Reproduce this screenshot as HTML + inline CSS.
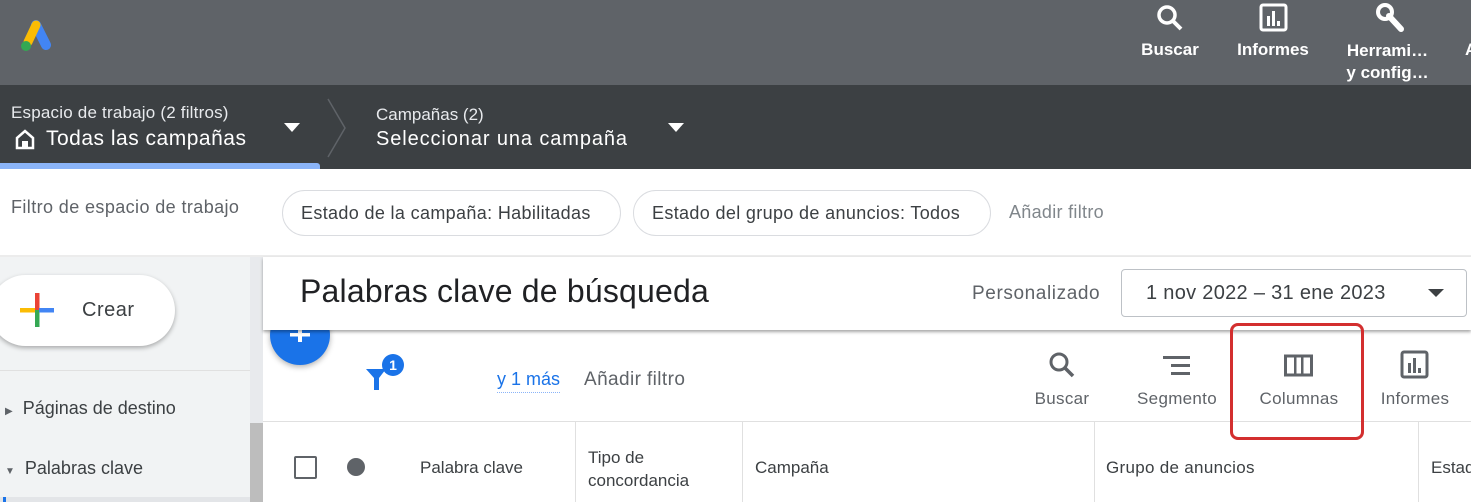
<!DOCTYPE html>
<html><head><meta charset="utf-8">
<style>
*{margin:0;padding:0;box-sizing:border-box}
body{width:1471px;height:502px;overflow:hidden;font-family:"Liberation Sans",sans-serif;background:#fff;position:relative}
.abs{position:absolute}
.top{left:0;top:0;width:1471px;height:85px;background:#5f6368}
.bar2{left:0;top:85px;width:1471px;height:84px;background:#3c4043}
.tnav{color:#fff;font-weight:bold;font-size:17px;text-align:center}
.w{color:#e8eaed}
.chip{border:1px solid #dadce0;border-radius:24px;height:46px;top:190px;font-size:18px;color:#3c4043;line-height:44px;padding:0 18px;letter-spacing:0.35px}
.tb{font-size:17px;color:#5f6368;text-align:center;letter-spacing:0.3px}
.th{font-size:17px;color:#3c4043}
.vd{top:422px;width:1px;height:80px;background:#e0e0e0}
</style></head><body>
<div class="abs top"></div>
<svg class="abs" style="left:18px;top:20px" width="36" height="34" viewBox="0 0 36 34">
<line x1="18" y1="5" x2="28" y2="25" stroke="#4285f4" stroke-width="10" stroke-linecap="round"/>
<line x1="18" y1="5" x2="10" y2="22" stroke="#fbbc04" stroke-width="9" stroke-linecap="round"/>
<circle cx="8" cy="26" r="5" fill="#34a853"/>
</svg>
<svg class="abs" style="left:1155px;top:3px" width="30" height="30" viewBox="0 0 30 30"><circle cx="12" cy="12" r="8" stroke="#fff" stroke-width="3.5" fill="none"/><line x1="18" y1="18" x2="26" y2="26" stroke="#fff" stroke-width="4"/></svg>
<div class="abs tnav" style="left:1130px;top:40px;width:80px">Buscar</div>
<svg class="abs" style="left:1259px;top:3px" width="30" height="30" viewBox="0 0 30 30"><rect x="2" y="2" width="25" height="25" rx="2" stroke="#fff" stroke-width="3" fill="none"/><rect x="8" y="13" width="3" height="10" fill="#fff"/><rect x="13" y="8" width="3" height="15" fill="#fff"/><rect x="18" y="18" width="3" height="5" fill="#fff"/></svg>
<div class="abs tnav" style="left:1228px;top:40px;width:90px">Informes</div>
<svg class="abs" style="left:1374px;top:2px" width="34" height="32" viewBox="0 0 34 32"><circle cx="11" cy="10" r="7" stroke="#fff" stroke-width="4" fill="none"/><line x1="15" y1="14" x2="27" y2="27" stroke="#fff" stroke-width="6" stroke-linecap="round"/></svg>
<div class="abs tnav" style="left:1340px;top:40px;width:95px;line-height:22px">Herrami…<br>y config…</div>
<div class="abs tnav" style="left:1465px;top:40px">A</div>

<div class="abs bar2"></div>
<div class="abs w" style="left:11px;top:103px;font-size:17px;letter-spacing:0.2px">Espacio de trabajo (2 filtros)</div>
<svg class="abs" style="left:14px;top:128px" width="22" height="22" viewBox="0 0 22 22"><path d="M3 10 L11 3 L19 10 V20 H3 Z" stroke="#fff" stroke-width="2.5" fill="none"/><rect x="8" y="13" width="6" height="7" fill="#fff"/></svg>
<div class="abs" style="left:46px;top:127px;font-size:21px;color:#fff;letter-spacing:0.5px">Todas las campañas</div>
<svg class="abs" style="left:284px;top:123px" width="16" height="10"><path d="M0 0 H16 L8 9Z" fill="#fff"/></svg>
<svg class="abs" style="left:325px;top:97px" width="25" height="62"><path d="M3 2 L20 31 L3 60" stroke="#5f6368" stroke-width="1.5" fill="none"/></svg>
<div class="abs w" style="left:376px;top:105px;font-size:17px">Campañas (2)</div>
<div class="abs" style="left:376px;top:128px;font-size:20px;color:#fff;letter-spacing:0.9px">Seleccionar una campaña</div>
<svg class="abs" style="left:668px;top:123px" width="16" height="10"><path d="M0 0 H16 L8 9Z" fill="#fff"/></svg>
<div class="abs" style="left:0;top:163px;width:320px;height:6px;background:#8ab4f8;border-radius:0 3px 0 0"></div>

<div class="abs" style="left:11px;top:197px;font-size:18px;color:#5f6368;letter-spacing:0.4px">Filtro de espacio de trabajo</div>
<div class="abs chip" style="left:282px;width:339px">Estado de la campaña: Habilitadas</div>
<div class="abs chip" style="left:633px;width:358px">Estado del grupo de anuncios: Todos</div>
<div class="abs" style="left:1009px;top:202px;font-size:18px;color:#80868b;letter-spacing:0.3px">Añadir filtro</div>
<div class="abs" style="left:0;top:255px;width:1471px;height:2px;background:#ececec"></div>

<div class="abs" style="left:0;top:257px;width:250px;height:245px;background:#f1f3f4"></div>
<div class="abs" style="left:250px;top:257px;width:13px;height:245px;background:#e8eaed"></div>
<div class="abs" style="left:250px;top:423px;width:13px;height:79px;background:#bdbdbd"></div>
<div class="abs" style="left:-10px;top:275px;width:185px;height:71px;background:#fff;border-radius:36px;box-shadow:0 2px 5px rgba(0,0,0,.3)"></div>
<svg class="abs" style="left:18px;top:291px" width="38" height="38" viewBox="0 0 38 38"><rect x="17" y="2" width="4.5" height="17" fill="#ea4335"/><rect x="17" y="19" width="4.5" height="17" fill="#34a853"/><rect x="2" y="17" width="15" height="4.5" fill="#fbbc04"/><rect x="21" y="17" width="15" height="4.5" fill="#4285f4"/></svg>
<div class="abs" style="left:82px;top:299px;font-size:20px;color:#3c4043;letter-spacing:0.5px">Crear</div>
<div class="abs" style="left:0;top:370px;width:250px;height:1px;background:#e0e0e0"></div>
<div class="abs" style="left:5px;top:398px;font-size:18px;color:#3c4043"><span style="font-size:10px;color:#5f6368">▶</span>&nbsp; Páginas de destino</div>
<div class="abs" style="left:5px;top:458px;font-size:18px;color:#3c4043"><span style="font-size:10px;color:#5f6368">▼</span>&nbsp; Palabras clave</div>
<div class="abs" style="left:0;top:497px;width:250px;height:5px;background:#e3e5e8"></div>
<div class="abs" style="left:3px;top:497px;width:3px;height:5px;background:#1a73e8"></div>

<div class="abs" style="left:263px;top:257px;width:1208px;height:73px;background:#fff;box-shadow:0 2px 3px rgba(0,0,0,.35);z-index:2"></div>
<div class="abs" style="left:300px;top:273px;font-size:32px;color:#202124;z-index:3;letter-spacing:0.2px">Palabras clave de búsqueda</div>
<div class="abs" style="left:972px;top:283px;font-size:19px;color:#5f6368;z-index:3;letter-spacing:0.6px">Personalizado</div>
<div class="abs" style="left:1121px;top:269px;width:346px;height:48px;border:1px solid #bdc1c6;border-radius:4px;z-index:3"></div>
<div class="abs" style="left:1146px;top:282px;font-size:20px;color:#3c4043;z-index:3;letter-spacing:0.3px">1 nov 2022 – 31 ene 2023</div>
<svg class="abs" style="left:1428px;top:289px;z-index:3" width="16" height="9"><path d="M0 0H16L8 8Z" fill="#3c4043"/></svg>

<div class="abs" style="left:270px;top:305px;width:60px;height:60px;border-radius:50%;background:#1a73e8;box-shadow:0 2px 6px rgba(0,0,0,.3);z-index:1"></div>
<svg class="abs" style="left:288px;top:330px;z-index:1" width="24" height="14"><rect x="10" y="0" width="4" height="12" fill="#fff"/><rect x="2" y="3" width="20" height="3.5" fill="#fff"/></svg>
<svg class="abs" style="left:364px;top:352px" width="42" height="42" viewBox="0 0 42 42"><path d="M2 17 H22 L15 26 V38 H10 V26 Z" fill="#1a73e8"/><circle cx="29" cy="13" r="11" fill="#1a73e8"/><text x="29" y="18" font-size="14" font-weight="bold" fill="#fff" text-anchor="middle" font-family="Liberation Sans">1</text></svg>
<div class="abs" style="left:497px;top:369px;font-size:18px;color:#1a73e8;border-bottom:1px dotted #8ab4f8;padding-bottom:2px">y 1 más</div>
<div class="abs" style="left:584px;top:369px;font-size:19px;color:#5f6368;letter-spacing:0.4px">Añadir filtro</div>

<svg class="abs" style="left:1047px;top:350px" width="30" height="30" viewBox="0 0 30 30"><circle cx="12" cy="12" r="8" stroke="#5f6368" stroke-width="3" fill="none"/><line x1="18" y1="18" x2="26" y2="26" stroke="#5f6368" stroke-width="3.5"/></svg>
<div class="abs tb" style="left:1022px;top:389px;width:80px">Buscar</div>
<svg class="abs" style="left:1162px;top:355px" width="32" height="22"><rect x="1" y="1" width="27" height="3" fill="#5f6368"/><rect x="9" y="9" width="19" height="3" fill="#5f6368"/><rect x="9" y="17" width="19" height="3" fill="#5f6368"/></svg>
<div class="abs tb" style="left:1120px;top:389px;width:114px">Segmento</div>
<svg class="abs" style="left:1284px;top:354px" width="30" height="24"><rect x="1.5" y="2" width="26" height="19" stroke="#5f6368" stroke-width="3" fill="none"/><rect x="10" y="2" width="2.5" height="19" fill="#5f6368"/><rect x="17" y="2" width="2.5" height="19" fill="#5f6368"/></svg>
<div class="abs tb" style="left:1242px;top:389px;width:114px">Columnas</div>
<svg class="abs" style="left:1400px;top:350px" width="30" height="30" viewBox="0 0 30 30"><rect x="2" y="2" width="25" height="25" rx="2" stroke="#5f6368" stroke-width="3" fill="none"/><rect x="8" y="13" width="3" height="10" fill="#5f6368"/><rect x="13" y="8" width="3" height="15" fill="#5f6368"/><rect x="18" y="18" width="3" height="5" fill="#5f6368"/></svg>
<div class="abs tb" style="left:1360px;top:389px;width:110px">Informes</div>
<div class="abs" style="left:1230px;top:323px;width:134px;height:117px;border:3px solid #d32f2f;border-radius:8px;z-index:4"></div>

<div class="abs" style="left:263px;top:421px;width:1208px;height:1px;background:#e0e0e0"></div>
<div class="abs" style="left:294px;top:456px;width:23px;height:23px;border:2px solid #5f6368;border-radius:2px"></div>
<div class="abs" style="left:347px;top:458px;width:18px;height:18px;border-radius:50%;background:#5f6368"></div>
<div class="abs th" style="left:420px;top:458px">Palabra clave</div>
<div class="abs vd" style="left:575px"></div>
<div class="abs th" style="left:588px;top:446px;line-height:23px">Tipo de<br>concordancia</div>
<div class="abs vd" style="left:742px"></div>
<div class="abs th" style="left:755px;top:458px">Campaña</div>
<div class="abs vd" style="left:1094px"></div>
<div class="abs th" style="left:1106px;top:458px;letter-spacing:0.3px">Grupo de anuncios</div>
<div class="abs vd" style="left:1418px"></div>
<div class="abs th" style="left:1431px;top:458px">Estado</div>
</body></html>
